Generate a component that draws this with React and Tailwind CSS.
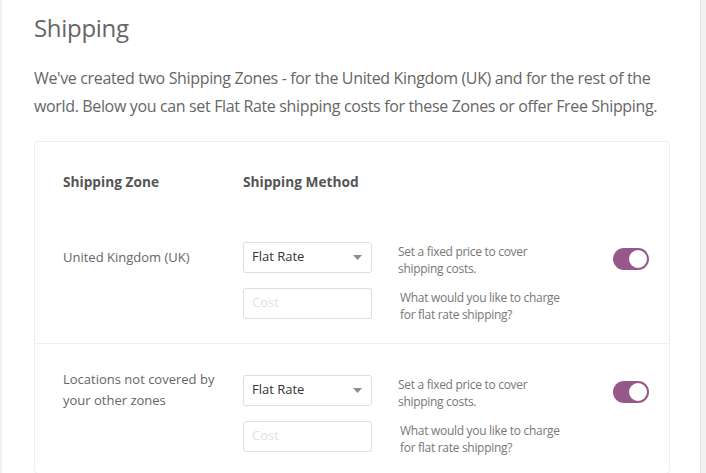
import React from 'react';

const font = { fontFamily: '"Open Sans", "Noto Sans", Arial, sans-serif' };

const zones = [
  { id: 1, name: 'United Kingdom (UK)' },
  { id: 2, name: 'Locations not covered by your other zones' },
];

const Toggle = () => (
  <div className="w-[36px] h-[22px] rounded-full bg-[#96588a] flex items-center justify-end pr-[2px]">
    <div className="w-[18px] h-[18px] rounded-full bg-white" />
  </div>
);

const ZoneRow = ({ zone, last }) => (
  <div className={`grid grid-cols-[180px_129px_1fr_36px] items-center gap-y-[12px] pl-[28px] pr-[20px] ${last ? 'pt-[29px] pb-[20px]' : 'pt-[48px] pb-[23px] border-b border-[#eee]'}`}>
    <div className="-my-[6px] text-[13px] leading-[21px] text-[#666] pr-[8px]">{zone.name}</div>
    <div className="h-[31px] border border-[#ddd] rounded-[3px] flex items-center justify-between pl-[8px] pr-[9px]">
      <span className="text-[13px] text-[#333]">Flat Rate</span>
      <svg width="9" height="5" viewBox="0 0 9 5"><path d="M0 0h9L4.5 5z" fill="#8c8c8c" /></svg>
    </div>
    <div className="translate-y-[3px] pl-[26px] text-[12px] leading-[17px] tracking-[-0.3px] text-[#777]">
      Set a fixed price to cover<br />shipping costs.
    </div>
    <div className="mt-[4px]"><Toggle /></div>

    <div />
    <div className="h-[31px] border border-[#ddd] rounded-[3px] flex items-center pl-[8px]">
      <span className="text-[13px] text-[#e2e2e2]">Cost</span>
    </div>
    <div className="translate-y-[3px] pl-[28px] text-[12px] leading-[17px] tracking-[-0.3px] text-[#777]">
      What would you like to charge<br />for flat rate shipping?
    </div>
    <div />
  </div>
);

const App = () => {
  return (
    <div className="min-h-screen bg-[#f1f1f1] overflow-hidden" style={font}>
      <div className="ml-[2px] w-[699px] bg-white border-r border-[#e5e5e5] px-[32px] pt-[12px] pb-[40px]">
        <h1 className="text-[24px] leading-[32px] text-[#666] font-normal tracking-[-0.3px]">Shipping</h1>
        <p className="mt-[20px] text-[16px] leading-[28px] tracking-[-0.35px] text-[#666]">
          We've created two Shipping Zones - for the United Kingdom (UK) and for the rest of the world. Below you can set Flat Rate shipping costs for these Zones or offer Free Shipping.
        </p>
        <div className="mt-[21px] w-[636px] border border-[#eee] rounded-[4px]">
          <div className="grid grid-cols-[180px_1fr] pl-[28px] pt-[30px] text-[13.7px] leading-[20px] font-bold text-[#555]">
            <div>Shipping Zone</div>
            <div>Shipping Method</div>
          </div>
          {zones.map((z, i) => (
            <ZoneRow key={z.id} zone={z} last={i === zones.length - 1} />
          ))}
        </div>
      </div>
    </div>
  );
};

export default App;
